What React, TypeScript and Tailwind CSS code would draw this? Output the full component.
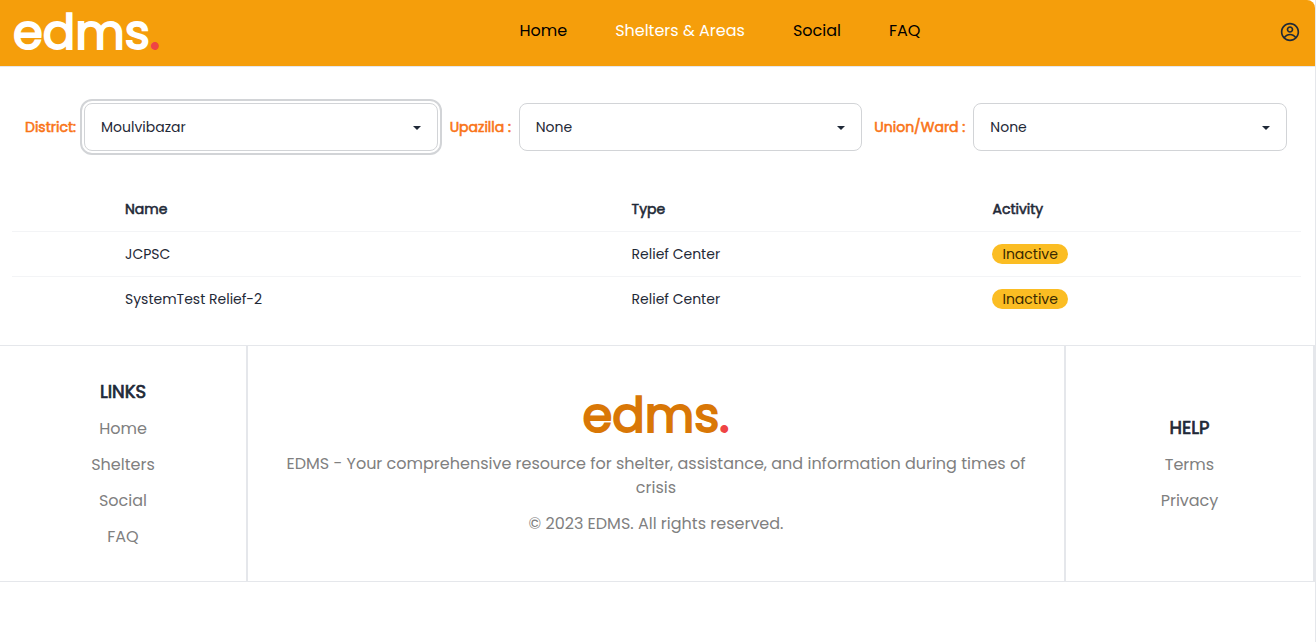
import type { ReactNode } from 'react'
import { CgProfile } from 'react-icons/cg'

const navLinks = [
  { label: 'Home', active: false },
  { label: 'Shelters & Areas', active: true },
  { label: 'Social', active: false },
  { label: 'FAQ', active: false },
]

const centers = [
  { name: 'JCPSC', type: 'Relief Center', activity: 'Inactive' },
  { name: 'SystemTest Relief-2', type: 'Relief Center', activity: 'Inactive' },
]

function Logo({ className }: { className: string }) {
  return (
    <span className={`block text-5xl leading-[48px] [-webkit-text-stroke-width:0.04em] ${className}`}>
      edms<span className="text-[#ef4444]">.</span>
    </span>
  )
}

function Filter({ id, label, labelClass, value, selectClass = '' }: {
  id: string
  label: string
  labelClass: string
  value: string
  selectClass?: string
}) {
  return (
    <div className="flex items-center gap-2">
      <label htmlFor={id} className={`shrink-0 text-sm whitespace-nowrap text-[#f97316] [-webkit-text-stroke-width:0.04em] ${labelClass}`}>
        {label}
      </label>
      <div className="relative min-w-0 flex-1">
        <select
          id={id}
          defaultValue={value}
          className={`block h-12 w-full appearance-none rounded-lg border border-[#d2d4d7] bg-white pr-10 pl-4 text-sm text-[#1f2937] ${selectClass}`}
        >
          <option>{value}</option>
        </select>
        <svg viewBox="0 0 8 4" className="pointer-events-none absolute top-[23px] right-[17px] h-1 w-2 fill-[#1f2937]" aria-hidden="true">
          <path d="M0 0h8L4 4z" />
        </svg>
      </div>
    </div>
  )
}

function FooterColumn({ title, links }: { title: string; links: string[] }) {
  return (
    <nav className="flex flex-col items-center justify-center gap-3 border-r-2 border-gray-200 pt-[33px] pb-8">
      <h2 className="text-lg leading-[26px] font-normal [-webkit-text-stroke-width:0.04em]">{title}</h2>
      {links.map((link) => (
        <a key={link} href="#" className="text-base leading-6 text-[#808080]">{link}</a>
      ))}
    </nav>
  )
}

function HeadCell({ children, className }: { children: ReactNode; className: string }) {
  return <th className={`h-11 px-4 py-0 font-normal [-webkit-text-stroke-width:0.04em] ${className}`}>{children}</th>
}

function Cell({ children }: { children?: ReactNode }) {
  return <td className="h-[45px] px-4 py-0">{children}</td>
}

export default function App() {
  return (
    <div className="min-h-screen border-r border-gray-200 bg-white font-['Poppins','Inter',sans-serif] text-[#1f2937]">
      <header className="flex items-center justify-between rounded-tr-lg border-b border-gray-200 bg-[#f59e0b] py-[9px] pr-[15px] pl-[13px]">
        <Logo className="text-white" />
        <nav className="flex gap-12 pb-1">
          {navLinks.map(({ label, active }) => (
            <a key={label} href="#" className={active ? 'text-base text-white' : 'text-base text-black'}>
              {label}
            </a>
          ))}
        </nav>
        <button type="button" aria-label="Profile" className="pb-[2px]">
          <CgProfile size={20} />
        </button>
      </header>

      <main>
        <form className="grid grid-cols-3 gap-3 pt-9 pr-7 pl-[25px]">
          <Filter id="district" label="District:" labelClass="w-[51px]" value="Moulvibazar" selectClass="outline-2 outline-offset-2 outline-[#d2d4d7]" />
          <Filter id="upazilla" label="Upazilla :" labelClass="w-[61px]" value="None" />
          <Filter id="union" label="Union/Ward :" labelClass="w-[91px]" value="None" />
        </form>

        <div className="pt-9 pr-[14px] pb-6 pl-3">
          <table className="w-full table-fixed text-left text-sm">
            <thead>
              <tr className="border-b border-gray-100">
                <td className="w-[97px]" />
                <HeadCell className="w-[39.3%]">Name</HeadCell>
                <HeadCell className="w-[28%]">Type</HeadCell>
                <HeadCell className="w-auto">Activity</HeadCell>
              </tr>
            </thead>
            <tbody>
              {centers.map((center) => (
                <tr key={center.name} className="border-b border-gray-100 last:border-b-0">
                  <Cell />
                  <Cell>{center.name}</Cell>
                  <Cell>{center.type}</Cell>
                  <Cell>
                    <span className="inline-flex h-5 items-center rounded-full bg-[#fbbd23] px-[10px] text-[#382800]">
                      {center.activity}
                    </span>
                  </Cell>
                </tr>
              ))}
            </tbody>
          </table>
        </div>
      </main>

      <footer className="grid grid-cols-[248px_1fr_249px] border-y border-gray-200">
        <FooterColumn title="LINKS" links={['Home', 'Shelters', 'Social', 'FAQ']} />
        <div className="flex flex-col items-center justify-center gap-3 border-r-2 border-gray-200 px-8 text-center text-base leading-6 text-[#808080]">
          <Logo className="text-[#d97706]" />
          <p>EDMS - Your comprehensive resource for shelter, assistance, and information during times of crisis</p>
          <p>© 2023 EDMS. All rights reserved.</p>
        </div>
        <FooterColumn title="HELP" links={['Terms', 'Privacy']} />
      </footer>
    </div>
  )
}
